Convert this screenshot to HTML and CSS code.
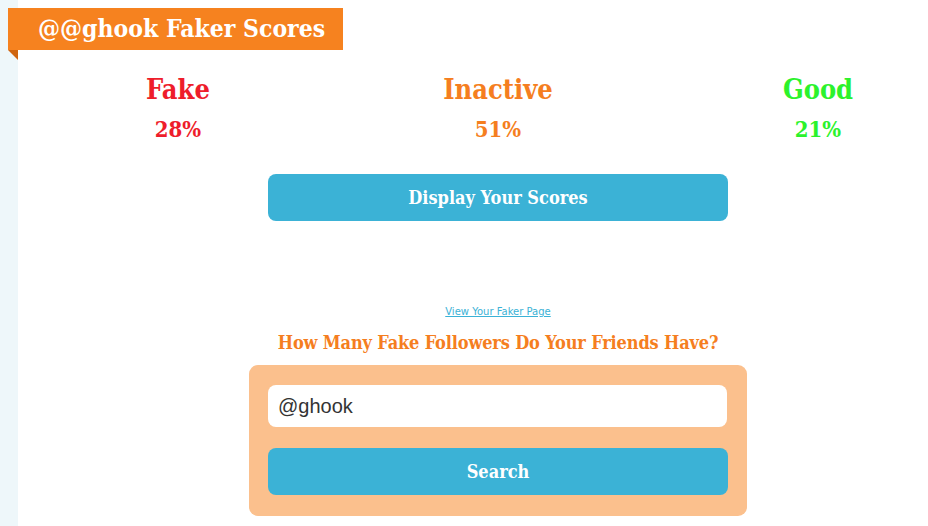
FILE: index.html
```html
<!DOCTYPE html>
<html lang="en">
<head>
<meta charset="utf-8">
<title>@@ghook Faker Scores</title>
<link rel="stylesheet" href="styles.css">
</head>
<body>
<div class="page">
  <div class="ribbon"><h1 class="ribbon-title">@@ghook Faker Scores</h1></div>
  <div class="scores">
    <div class="score score-fake">
      <div class="score-label">Fake</div>
      <div class="score-value">28%</div>
    </div>
    <div class="score score-inactive">
      <div class="score-label">Inactive</div>
      <div class="score-value">51%</div>
    </div>
    <div class="score score-good">
      <div class="score-label">Good</div>
      <div class="score-value">21%</div>
    </div>
  </div>
  <div class="actions">
    <button class="btn btn-display">Display Your Scores</button>
  </div>
  <div class="faker-link-row"><a class="faker-link" href="#">View Your Faker Page</a></div>
  <h2 class="friends-title">How Many Fake Followers Do Your Friends Have?</h2>
  <form class="search-box">
    <input class="search-input" type="text" value="@ghook">
    <button class="btn btn-search" type="button">Search</button>
  </form>
</div>
</body>
</html>
```

FILE: styles.css
```css
html, body {
  margin: 0;
  padding: 0;
  overflow: hidden;
  background: #eef7fa;
}
body {
  font-family: "DejaVu Serif Condensed", "DejaVu Serif", serif;
}
.page {
  margin-left: 18px;
  width: 960px;
  min-height: 526px;
  background: #ffffff;
  padding-top: 8px;
  box-sizing: border-box;
}
.ribbon {
  position: relative;
  margin-left: -10px;
  width: 335px;
  background: #f6821f;
  height: 42px;
  padding-left: 30px;
  box-sizing: border-box;
}
.ribbon::after {
  content: "";
  position: absolute;
  left: 0;
  top: 42px;
  border-top: 10px solid #cf6510;
  border-left: 10px solid transparent;
}
.ribbon-title {
  margin: 0;
  font-size: 24.5px;
  line-height: 42px;
  font-weight: bold;
  color: #ffffff;
  white-space: nowrap;
}
.scores {
  display: grid;
  grid-template-columns: repeat(3, 320px);
  margin-top: 23px;
  text-align: center;
}
.score-label {
  font-size: 27px;
  line-height: 34px;
  font-weight: bold;
}
.score-value {
  font-size: 22px;
  line-height: 28px;
  font-weight: bold;
  margin-top: 8px;
}
.score-fake { color: #ee1d2b; }
.score-inactive { color: #f57e20; }
.score-good { color: #2cf22c; }
.actions {
  display: flex;
  justify-content: center;
  margin-top: 31px;
}
.btn {
  display: block;
  width: 460px;
  height: 47px;
  border: none;
  border-radius: 8px;
  background: #3bb2d6;
  color: #ffffff;
  font-family: "DejaVu Serif Condensed", "DejaVu Serif", serif;
  font-weight: bold;
  font-size: 18px;
  padding: 0;
}
.faker-link-row {
  text-align: center;
  margin-top: 82px;
  line-height: 14px;
}
.faker-link {
  font-family: "DejaVu Sans", Verdana, sans-serif;
  font-size: 10px;
  color: #3bb2d6;
}
.friends-title {
  margin: 10px 0 0;
  text-align: center;
  font-size: 18px;
  line-height: 28px;
  font-weight: bold;
  color: #f57e20;
  letter-spacing: -0.15px;
}
.search-box {
  width: 498px;
  margin: 8px auto 0;
  padding: 20px 19px 21px 19px;
  box-sizing: border-box;
  background: #fbc08d;
  border-radius: 9px;
  display: flex;
  flex-direction: column;
  gap: 21px;
}
.search-input {
  display: block;
  height: 42px;
  width: 459px;
  border: none;
  border-radius: 8px;
  background: #ffffff;
  box-sizing: border-box;
  padding: 0 10px;
  font-family: "Liberation Sans", Arial, sans-serif;
  font-size: 20px;
  color: #333333;
  outline: none;
}
.btn-search {
  width: 460px;
}
```
